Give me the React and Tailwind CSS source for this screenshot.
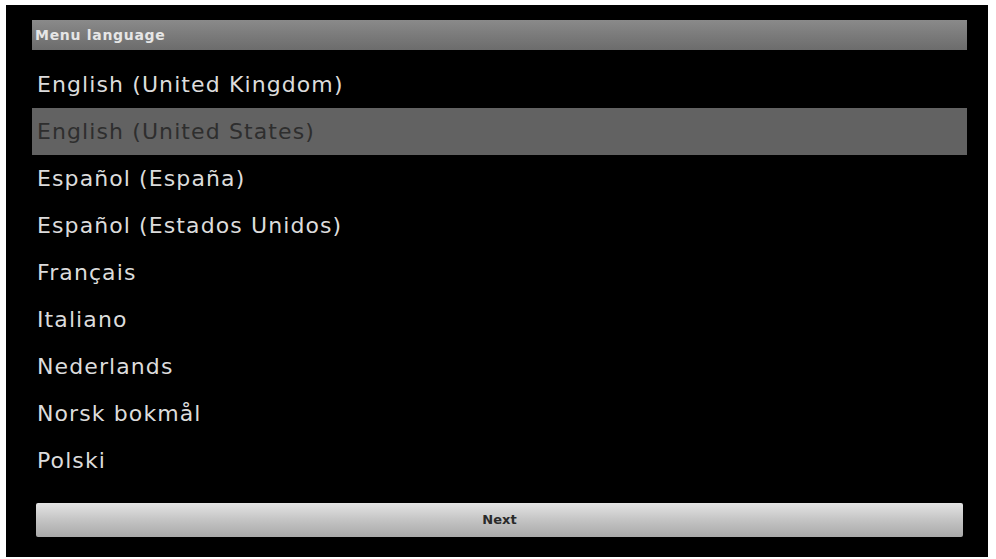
import React from "react";

const languages = [
  "English (United Kingdom)",
  "English (United States)",
  "Español (España)",
  "Español (Estados Unidos)",
  "Français",
  "Italiano",
  "Nederlands",
  "Norsk bokmål",
  "Polski",
];

const selected = "English (United States)";

export default function App() {
  return (
    <div className="w-[996px] h-[559px] bg-white pt-[5px] pl-[6px] pr-[8px] pb-[2px] font-['DejaVu_Sans',sans-serif]">
      <div className="flex h-full flex-col bg-black pl-[26px] pr-[21px] pt-[15px]">
        {/* title bar */}
        <div className="flex h-[30px] items-center bg-gradient-to-b from-[#8a8a8a] to-[#6c6c6c] px-[3px]">
          <span className="text-[14px] font-bold text-[#e6e6e6] tracking-[0.7px]">Menu language</span>
        </div>

        {/* language list */}
        <ul className="mt-[11px] flex flex-col">
          {languages.map((lang) => {
            const active = lang === selected;
            return (
              <li
                key={lang}
                className={
                  active
                    ? "flex h-[47px] items-center bg-[#626262] px-[5px] text-[22px] tracking-[1.1px] text-[#2e2e2e]"
                    : "flex h-[47px] items-center px-[5px] text-[22px] tracking-[1.1px] text-[#dcdcdc]"
                }
              >
                {lang}
              </li>
            );
          })}
        </ul>

        {/* next button */}
        <div className="mt-auto mb-[20px] px-[4px]">
          <button className="flex h-[34px] w-full items-center justify-center rounded-[2px] bg-gradient-to-b from-[#e4e4e4] via-[#c4c4c4] to-[#a9a9a9] text-[13px] font-bold text-[#2a2a2a]">
            Next
          </button>
        </div>
      </div>
    </div>
  );
}
